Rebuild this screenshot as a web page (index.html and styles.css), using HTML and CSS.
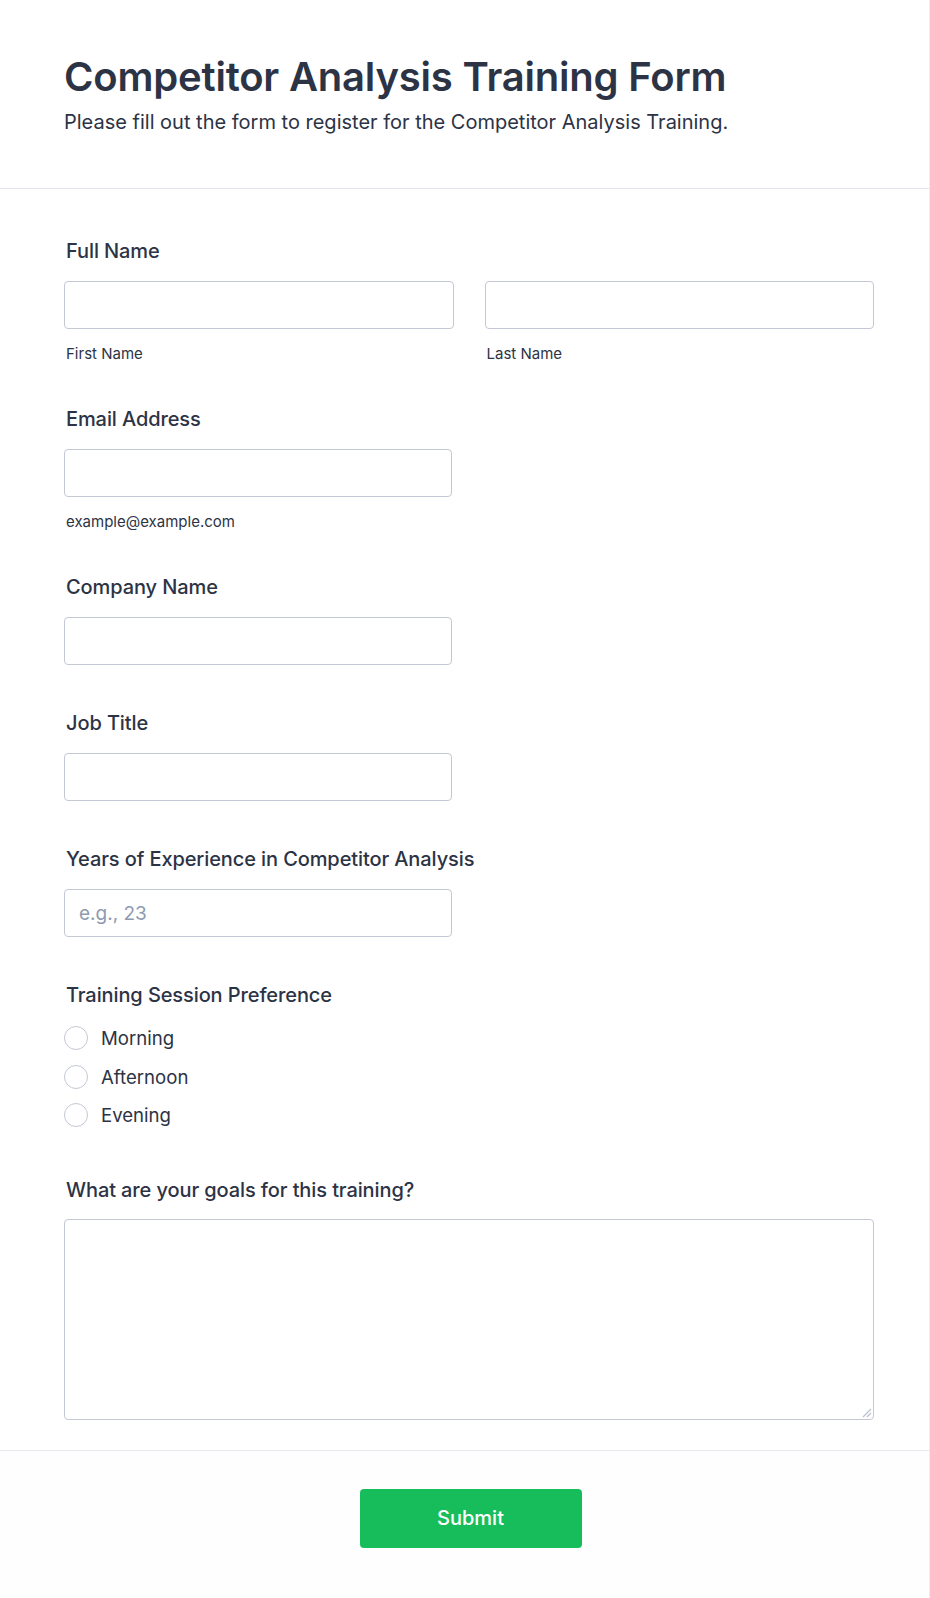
FILE: index.html
```html
<!DOCTYPE html>
<html lang="en">
<head>
<meta charset="utf-8">
<title>Competitor Analysis Training Form</title>
<link rel="stylesheet" href="styles.css">
</head>
<body>
<form class="card">
  <header class="form-header">
    <h1 class="form-title">Competitor Analysis Training Form</h1>
    <p class="form-subtitle">Please fill out the form to register for the Competitor Analysis Training.</p>
  </header>

  <section class="form-body">
    <div class="field field-sub">
      <label class="field-label">Full Name</label>
      <div class="name-grid">
        <div class="name-col">
          <input class="text-input" type="text">
          <span class="sublabel">First Name</span>
        </div>
        <div class="name-col">
          <input class="text-input" type="text">
          <span class="sublabel">Last Name</span>
        </div>
      </div>
    </div>

    <div class="field field-sub">
      <label class="field-label">Email Address</label>
      <input class="text-input half" type="email">
      <span class="sublabel">example@example.com</span>
    </div>

    <div class="field">
      <label class="field-label">Company Name</label>
      <input class="text-input half" type="text">
    </div>

    <div class="field">
      <label class="field-label">Job Title</label>
      <input class="text-input half" type="text">
    </div>

    <div class="field">
      <label class="field-label">Years of Experience in Competitor Analysis</label>
      <input class="text-input half" type="text" placeholder="e.g., 23">
    </div>

    <div class="field field-radio">
      <label class="field-label radio-title">Training Session Preference</label>
      <div class="radio-list">
        <label class="radio-row"><span class="radio-circle"></span><span class="radio-text">Morning</span></label>
        <label class="radio-row"><span class="radio-circle"></span><span class="radio-text">Afternoon</span></label>
        <label class="radio-row"><span class="radio-circle"></span><span class="radio-text">Evening</span></label>
      </div>
    </div>

    <div class="field field-last">
      <label class="field-label goals-label">What are your goals for this training?</label>
      <textarea class="textarea"></textarea>
    </div>
  </section>

  <footer class="form-footer">
    <button type="button" class="submit-btn">Submit</button>
  </footer>
</form>
</body>
</html>
```

FILE: styles.css
```css
* {
  box-sizing: border-box;
}

html, body {
  margin: 0;
  padding: 0;
  background: #ffffff;
}

body {
  font-family: Inter, "Noto Sans", "Liberation Sans", sans-serif;
  color: #2c3345;
}

.card {
  width: 930px;
  min-height: 1598px;
  border-right: 1px solid #eceef2;
  background: #ffffff;
  display: flex;
  flex-direction: column;
}

.form-header {
  padding: 53px 64px 52px 64px;
  border-bottom: 1px solid #e3e5ec;
}

.form-title {
  margin: 0;
  font-size: 40px;
  line-height: 48px;
  font-weight: 600;
  color: #2c3345;
  letter-spacing: -0.2px;
}

.form-subtitle {
  margin: 7px 0 0 0;
  font-size: 20px;
  line-height: 28px;
  font-weight: 400;
  color: #2c3345;
}

.form-body {
  padding: 50px 55px 30px 64px;
  border-bottom: 1px solid #e9eaf0;
}

.field {
  display: flex;
  flex-direction: column;
  align-items: flex-start;
  margin-bottom: 46px;
}

.field-sub {
  margin-bottom: 43px;
}

.field-radio {
  margin-bottom: 43px;
}

.field-last {
  margin-bottom: 0;
  align-items: stretch;
}

.field-label {
  display: block;
  font-size: 20px;
  line-height: 24px;
  font-weight: 500;
  letter-spacing: -0.1px;
  color: #2c3345;
  margin: 0 0 18px 2px;
}

.radio-title {
  margin-bottom: 12px;
}

.goals-label {
  margin-bottom: 17px;
}

.name-grid {
  display: grid;
  grid-template-columns: 1fr 1fr;
  column-gap: 31px;
  width: 100%;
}

.name-col {
  display: flex;
  flex-direction: column;
}

.text-input {
  display: block;
  width: 100%;
  height: 48px;
  border: 1px solid #c3c8d4;
  border-radius: 4px;
  background: #ffffff;
  padding: 0 14px;
  font-family: inherit;
  font-size: 19px;
  color: #2c3345;
  outline: none;
}

.text-input.half {
  width: 388px;
}

.text-input::placeholder {
  color: #8d9ab0;
  opacity: 1;
}

.sublabel {
  display: block;
  margin: 15px 0 0 2px;
  font-size: 15px;
  line-height: 20px;
  color: #2c3345;
}

.radio-list {
  display: flex;
  flex-direction: column;
}

.radio-row {
  display: flex;
  align-items: center;
  height: 38.5px;
  gap: 13px;
}

.radio-circle {
  width: 24px;
  height: 24px;
  border: 1px solid #c3c8d4;
  border-radius: 50%;
  background: #ffffff;
  flex: none;
}

.radio-text {
  font-size: 18.6px;
  line-height: 24px;
  color: #2c3345;
}

.textarea {
  display: block;
  width: 100%;
  height: 201px;
  border: 1px solid #c3c8d4;
  border-radius: 4px;
  padding: 12px 14px;
  font-family: inherit;
  font-size: 18px;
  color: #2c3345;
  outline: none;
  resize: vertical;
}

.textarea::-webkit-resizer {
  background-color: transparent;
  background-image: url("data:image/svg+xml;utf8,<svg xmlns='http://www.w3.org/2000/svg' width='12' height='12'><path d='M11 3 L3 11 M11 7 L7 11' stroke='%23b9bfcc' stroke-width='1.2' fill='none'/></svg>");
  background-repeat: no-repeat;
  background-position: right 1px bottom 1px;
}

.form-footer {
  flex: 1;
  display: flex;
  justify-content: center;
  align-items: flex-start;
  padding: 38px 52px 49px 64px;
  background: #fefefe;
}

.submit-btn {
  width: 222px;
  height: 59px;
  border: none;
  border-radius: 4px;
  background: #18bd5b;
  color: #ffffff;
  font-family: inherit;
  font-size: 20px;
  font-weight: 500;
  cursor: pointer;
}
```
